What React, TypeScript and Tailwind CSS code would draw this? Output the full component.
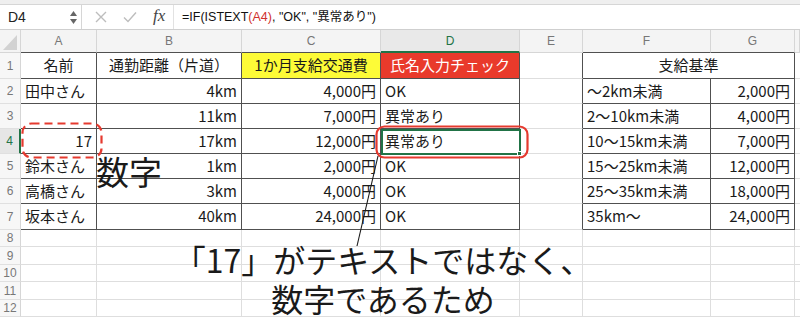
import React from "react";

const jp = "font-['Noto_Sans_CJK_JP','Noto_Sans',sans-serif]";

type Cell = { t: string; a?: "l" | "r" | "c"; bg?: string };

const cols = ["A", "B", "C", "D", "E", "F", "G", ""];

const rows: Cell[][] = [
  [{ t: "名前", a: "c" }, { t: "通勤距離（片道）", a: "c" }, { t: "1か月支給交通費", a: "c", bg: "yellow" }, { t: "氏名入力チェック", a: "c", bg: "red" }, { t: "" }, { t: "支給基準", a: "c" }, { t: "" }, { t: "" }],
  [{ t: "田中さん" }, { t: "4km", a: "r" }, { t: "4,000円", a: "r" }, { t: "OK" }, { t: "" }, { t: "～2km未満" }, { t: "2,000円", a: "r" }, { t: "" }],
  [{ t: "" }, { t: "11km", a: "r" }, { t: "7,000円", a: "r" }, { t: "異常あり" }, { t: "" }, { t: "2～10km未満" }, { t: "4,000円", a: "r" }, { t: "" }],
  [{ t: "17", a: "r" }, { t: "17km", a: "r" }, { t: "12,000円", a: "r" }, { t: "異常あり" }, { t: "" }, { t: "10～15km未満" }, { t: "7,000円", a: "r" }, { t: "" }],
  [{ t: "鈴木さん" }, { t: "1km", a: "r" }, { t: "2,000円", a: "r" }, { t: "OK" }, { t: "" }, { t: "15～25km未満" }, { t: "12,000円", a: "r" }, { t: "" }],
  [{ t: "高橋さん" }, { t: "3km", a: "r" }, { t: "4,000円", a: "r" }, { t: "OK" }, { t: "" }, { t: "25～35km未満" }, { t: "18,000円", a: "r" }, { t: "" }],
  [{ t: "坂本さん" }, { t: "40km", a: "r" }, { t: "24,000円", a: "r" }, { t: "OK" }, { t: "" }, { t: "35km～" }, { t: "24,000円", a: "r" }, { t: "" }],
];

// 1-based row, 1-based col (A = 1)
const inTable = (r: number, c: number) =>
  r >= 1 && r <= 7 && ((c >= 1 && c <= 4) || c === 6 || c === 7);

function cellBorders(r: number, c: number) {
  const right = inTable(r, c) || inTable(r, c + 1);
  const bottom = inTable(r, c) || inTable(r + 1, c);
  const rc = right ? "border-r border-r-[#505050]" : "border-r border-r-[#dedede]";
  const bc = bottom ? "border-b border-b-[#505050]" : "border-b border-b-[#dedede]";
  return rc + " " + bc;
}

function FormulaBar() {
  return (
    <>
      <div className="h-[5px] bg-[#efefef] border-b border-b-[#d6d6d6]" />
      <div className="h-[25px] flex items-center bg-white border-b border-b-[#cfcfcf] font-['Liberation_Sans','Noto_Sans_CJK_JP',sans-serif]">
        <div className="w-[82px] h-full flex items-center justify-between pl-[8px] pr-[4px] border-r border-r-[#d6d6d6]">
          <span className="text-[14px] text-[#222]">D4</span>
          <div className="flex flex-col items-center gap-[3px]">
            <svg width="7" height="5" viewBox="0 0 7 5"><path d="M3.5 0 L7 5 L0 5 Z" fill="#666" /></svg>
            <svg width="7" height="5" viewBox="0 0 7 5"><path d="M0 0 L7 0 L3.5 5 Z" fill="#666" /></svg>
          </div>
        </div>
        <div className="flex items-center w-[92px] h-full pl-[13px] gap-[16px] border-r border-r-[#e2e2e2]">
          <svg width="12" height="12" viewBox="0 0 12 12"><path d="M1 1 L11 11 M11 1 L1 11" stroke="#bdbdbd" strokeWidth="1.4" /></svg>
          <svg width="14" height="12" viewBox="0 0 14 12"><path d="M1 6.5 L5 10.5 L13 1.5" stroke="#bdbdbd" strokeWidth="1.4" fill="none" /></svg>
          <span className="italic text-[17px] text-[#444] font-['Liberation_Serif',serif] -mt-[2px]">fx</span>
        </div>
        <div className="pl-[8px] text-[12.5px] text-[#111] whitespace-nowrap">
          =IF(ISTEXT<span className="text-[#d0312d]">(A4)</span>, "OK", "異常あり")
        </div>
      </div>
    </>
  );
}

function Sheet() {
  return (
    <div
      className={`grid grid-cols-[21px_76px_145px_139px_139px_63px_128px_84px_5px] grid-rows-[23px_26px_25px_25px_25px_25px_25px_26px_17px_18px_17px_18px_17px] ${jp}`}
    >
      {/* header row */}
      <div className="relative bg-[#f4f4f4] border-r border-r-[#d6d6d6] border-b border-b-[#d6d6d6]">
        <svg className="absolute right-[3px] bottom-[2px]" width="14" height="15" viewBox="0 0 14 15">
          <path d="M14 0 L14 15 L0 15 Z" fill="#d2d2d2" />
        </svg>
      </div>
      {cols.map((l, i) => {
        const c = i + 1;
        if (l === "D")
          return (
            <div key={l} className="flex items-center justify-center bg-[#e9e9e9] border-r border-r-[#d6d6d6] border-b-2 border-b-[#217346] text-[12px] text-[#217346] font-['Liberation_Sans',sans-serif]">
              {l}
            </div>
          );
        return (
          <div
            key={i}
            className={`flex items-center justify-center bg-[#f4f4f4] border-r border-r-[#d6d6d6] text-[12px] text-[#777] font-['Liberation_Sans',sans-serif] ${
              inTable(1, c) ? "border-b border-b-[#505050]" : "border-b border-b-[#d6d6d6]"
            }`}
          >
            {l}
          </div>
        );
      })}

      {Array.from({ length: 12 }).map((_, ri) => {
        const r = ri + 1;
        const data = rows[ri];
        return (
          <React.Fragment key={r}>
            <div
              className={`flex items-center justify-center text-[12px] font-['Liberation_Sans',sans-serif] border-b border-b-[#e0e0e0] ${
                r === 4
                  ? "bg-[#e6e6e6] text-[#217346] border-r-2 border-r-[#217346]"
                  : "bg-[#f7f7f7] text-[#777] border-r border-r-[#d6d6d6]"
              }`}
            >
              {r}
            </div>
            {cols.map((_, ci) => {
              const c = ci + 1;
              if (r === 1 && c === 7) return null;
              const cell = data ? data[ci] : { t: "" };
              const span = r === 1 && c === 6;
              const border = span ? "border-r border-r-[#505050] border-b border-b-[#505050]" : cellBorders(r, c);
              const align =
                cell.a === "r" ? "justify-end" : cell.a === "c" ? "justify-center" : "justify-start";
              const bg =
                cell.bg === "yellow"
                  ? "bg-[#fdfb37] text-[#1a1a1a]"
                  : cell.bg === "red"
                  ? "bg-[#e93a2b] text-white"
                  : "bg-white text-[#1a1a1a]";
              return (
                <div
                  key={c}
                  className={`flex items-center px-[4px] text-[15px] whitespace-nowrap overflow-visible ${align} ${bg} ${border} ${
                    span ? "col-span-2" : ""
                  }`}
                >
                  {cell.t}
                </div>
              );
            })}
          </React.Fragment>
        );
      })}
    </div>
  );
}

export default function App() {
  return (
    <div className="relative w-[800px] h-[317px] overflow-hidden bg-white">
      <FormulaBar />
      <Sheet />

      {/* selected cell D4 */}
      <div className="absolute left-[381px] top-[129px] w-[140px] h-[26px] border-2 border-[#217346]">
        <div className="absolute -right-[3px] -bottom-[3px] w-[5px] h-[5px] bg-[#217346] border border-white" />
      </div>

      {/* annotations */}
      <svg className="absolute left-0 top-0" width="800" height="317" viewBox="0 0 800 317">
        <rect x="22.5" y="123.5" width="79" height="34" rx="9" fill="none" stroke="#e53a2f" strokeWidth="2.2" strokeDasharray="8 5" />
        <rect x="376.5" y="126.5" width="151" height="31" rx="8" fill="none" stroke="#e53a2f" strokeWidth="2.2" />
        <line x1="378" y1="156" x2="357" y2="246" stroke="#1a1a1a" strokeWidth="1.1" />
      </svg>

      <div className={`absolute left-[96px] top-[153px] text-[33px] leading-[36px] text-[#1a1a1a] ${jp}`}>数字</div>

      <div className={`absolute left-[83px] top-[242px] w-[600px] flex flex-col items-center gap-[4px] text-[32px] leading-[35px] text-[#1a1a1a] whitespace-nowrap ${jp}`}>
        <div>「17」がテキストではなく、</div>
        <div>数字であるため</div>
      </div>
    </div>
  );
}
